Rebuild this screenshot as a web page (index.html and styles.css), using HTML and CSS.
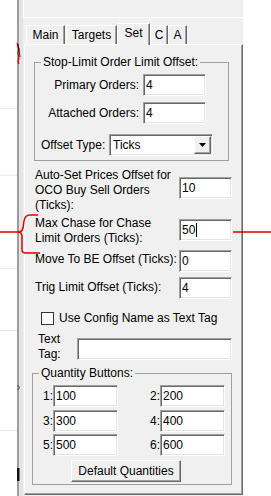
FILE: index.html
```html
<!DOCTYPE html>
<html lang="en">
<head>
    <meta charset="UTF-8">
    <meta name="viewport" content="width=device-width, initial-scale=1.0">
    <title>Set</title>
    <link rel="stylesheet" href="styles.css">
</head>
<body>
<div class="screen">
    <div class="chart"></div>
    <div class="splitter"></div>
    <div class="win">
        <div class="toolbar"></div>
        <div class="tabs">
            <span class="tab t-main">Main</span>
            <span class="tab t-targets">Targets</span>
            <span class="tab t-set on">Set</span>
            <span class="tab t-c">C</span>
            <span class="tab t-a">A</span>
        </div>
        <div class="page">
            <!-- stop-limit group -->
            <fieldset class="group g-offset">
                <legend>Stop-Limit Order Limit Offset:</legend>
                <div class="frow r1"><span class="flabel">Primary Orders:</span><span class="box sunk w63">4</span></div>
                <div class="frow r2"><span class="flabel">Attached Orders:</span><span class="box sunk w63">4</span></div>
                <div class="frow r3">
                    <span class="tlabel">Offset Type:</span>
                    <span class="combo sunk">
                        <span class="combo-text">Ticks</span>
                        <span class="combo-btn raised">
                            <svg width="7" height="4" viewBox="0 0 7 4"><polygon points="0,0 7,0 3.5,4" fill="#000"/></svg>
                        </span>
                    </span>
                </div>
            </fieldset>

            <div class="row ra"><span class="rlabel">Auto-Set Prices Offset for<br>OCO Buy Sell Orders<br>(Ticks):</span><span class="box sunk">10</span></div>
            <div class="row rb"><span class="rlabel">Max Chase for Chase<br>Limit Orders (Ticks):</span><span class="box sunk">50<i class="caret"></i></span></div>
            <div class="row rc"><span class="rlabel">Move To BE Offset (Ticks):</span><span class="box sunk">0</span></div>
            <div class="row rd"><span class="rlabel">Trig Limit Offset (Ticks):</span><span class="box sunk">4</span></div>

            <div class="check-row">
                <span class="chk"></span>
                <span class="chk-label">Use Config Name as Text Tag</span>
            </div>

            <div class="tag-row">
                <span class="tag-label">Text<br>Tag:</span>
                <span class="box sunk w155"></span>
            </div>

            <!-- quantity group -->
            <fieldset class="group g-qty">
                <legend>Quantity Buttons:</legend>
                <div class="qrow q1"><span class="ql1">1:</span><span class="box sunk w65">100</span><span class="ql2">2:</span><span class="box sunk w65">200</span></div>
                <div class="qrow q2"><span class="ql1">3:</span><span class="box sunk w65">300</span><span class="ql2">4:</span><span class="box sunk w65">400</span></div>
                <div class="qrow q3"><span class="ql1">5:</span><span class="box sunk w65">500</span><span class="ql2">6:</span><span class="box sunk w65">600</span></div>
                <div class="btn raised">Default Quantities</div>
            </fieldset>
        </div>
    </div>
    <div class="blank"></div>
</div>

<!-- red pen marks and chart bits drawn over the screenshot -->
<svg class="marks" width="271" height="496" viewBox="0 0 271 496">
    <g stroke="#e9e9e9" stroke-width="1">
        <line x1="0" y1="108.5" x2="17" y2="108.5"/>
        <line x1="0" y1="175.5" x2="17" y2="175.5"/>
        <line x1="0" y1="268.5" x2="17" y2="268.5"/>
        <line x1="0" y1="330.5" x2="17" y2="330.5"/>
        <line x1="0" y1="430.5" x2="17" y2="430.5"/>
    </g>
    <polyline points="17,43 18,47 19,49 18,53 19,58 18,62 19,64" fill="none" stroke="#e00000" stroke-width="1.2"/>
    <polyline points="18,44 19,50 20,57" fill="none" stroke="#000" stroke-width="0.8"/>
    <path d="M17.5,386 q2,0 2,1.5 q0,1.5 -2,2" fill="none" stroke="#333" stroke-width="0.8"/>
    <rect x="17" y="468" width="2.5" height="13" fill="#111"/>
    <g fill="none" stroke="#e00000" stroke-width="1.5">
        <line x1="0" y1="232" x2="19" y2="232"/>
        <path d="M38,215 H30 Q25,215 24,221 L23,228 Q22,232 18,232 Q22,232 22,237 L22,250 Q22,253 26,253 H40"/>
        <line x1="233" y1="232" x2="271" y2="232"/>
    </g>
</svg>
</body>
</html>
```

FILE: styles.css
```css
* {margin:0; padding:0; box-sizing:border-box;}
body {width:271px; height:496px; overflow:hidden; position:relative; background:#fff; color:#000; font:12px/15px "Liberation Sans", Arial, sans-serif;}
.screen {display:flex; height:496px;}
.chart {width:17px; background:#fff;}
.splitter {width:6px; background:linear-gradient(to right, #9c9c9c 0 2px, #e4e4e4 2px);}
.win {width:220px; background:#f0f0f0; display:flex; flex-direction:column;}
.blank {flex:1; background:#fff;}
.toolbar {height:18px; border-left:1px solid #fff; border-bottom:1px solid #fff;}

/* tabs */
.tabs {display:flex; align-items:flex-end; height:26px; padding-left:3px;}
.tab {height:19px; line-height:18px; text-align:center; border:1px solid #fff; border-bottom:0; border-right-color:#696969; box-shadow:inset -1px 0 #a0a0a0; background:#f0f0f0;}
.tab.on {height:22px; line-height:19px; margin-bottom:-1px; position:relative; z-index:1;}
.t-main {width:39px; margin-right:1px;}
.t-targets {width:51px;}
.t-set {width:33px;}
.t-c {width:18px;}
.t-a {width:19px;}

.page {margin-left:1px; width:219px; height:451px; border-top:1px solid #fff; border-left:1px solid #fff; border-right:1px solid #696969; border-bottom:1px solid #696969; box-shadow:inset -1px -1px #a0a0a0;}

/* 3d controls */
.sunk {background:#fff; border:1px solid; border-color:#a0a0a0 #fff #fff #a0a0a0; box-shadow:inset 1px 1px #696969, inset -1px -1px #e3e3e3;}
.raised {background:#f0f0f0; border:1px solid; border-color:#fff #696969 #696969 #fff; box-shadow:inset -1px -1px #a0a0a0;}
.box {display:block; width:53px; height:22px; padding:1px 1px 1px 2px; line-height:18px; white-space:nowrap; overflow:hidden;}
.w63 {width:63px;}
.w65 {width:65px;}
.w155 {width:155px;}
.caret {display:inline-block; width:1px; height:14px; background:#000; vertical-align:-3px; margin-left:1px;}

/* group boxes */
.group {border:1px solid #a0a0a0; min-width:0;}
.group legend {margin-left:6px; padding:0 2px; line-height:15px;}
.g-offset {margin:10px 0 0 9px; width:195px; padding-bottom:4px;}
.frow {display:flex; align-items:center; height:22px;}
.r1 {margin-top:4px;}
.r2 {margin-top:6px;}
.r3 {margin-top:10px;}
.flabel {width:104px; margin-right:4px; text-align:right;}
.tlabel {width:68px; margin-left:6px;}
.combo {display:flex; width:104px; height:22px; padding:1px;}
.combo-text {flex:1; padding-left:2px; line-height:18px;}
.combo-btn {width:17px; height:18px; display:flex; align-items:center; justify-content:center;}

/* single rows */
.row {display:flex; align-items:flex-start; margin-left:10px;}
.rlabel {width:144px; white-space:nowrap;}
.ra {margin-top:7px;}
.ra .box {margin-top:9px;}
.rb {margin-top:3px;}
.rb .box {margin-top:3px;}
.rc {margin-top:4px;}
.rc .rlabel {margin-top:2px;}
.rd {margin-top:5px;}
.rd .rlabel {margin-top:3px;}

.check-row {display:flex; align-items:center; height:13px; margin:13px 0 0 16px;}
.chk {width:13px; height:13px; border:1px solid #333; background:#fff;}
.chk-label {margin-left:5px; line-height:13px; white-space:nowrap;}

.tag-row {display:flex; align-items:flex-start; margin:7px 0 0 13px;}
.tag-label {width:39px;}
.tag-row .box {margin-top:6px;}

.g-qty {margin:4px 0 0 7px; width:200px; padding-bottom:2px;}
.qrow {display:flex; align-items:center; height:22px;}
.q1 {margin-top:4px;}
.q2 {margin-top:3px;}
.q3 {margin-top:2px;}
.ql1 {width:20px; text-align:right;}
.ql2 {width:42px; text-align:right;}
.btn {width:110px; height:22px; margin:4px 0 0 38px; text-align:center; line-height:20px;}

.marks {position:absolute; left:0; top:0; pointer-events:none;}
```
